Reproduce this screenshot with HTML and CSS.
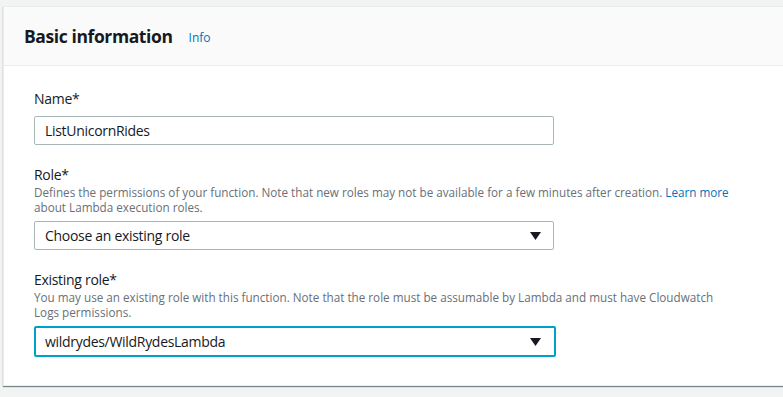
FILE: index.html
```html
<!DOCTYPE html>
<html lang="en">
<head>
<meta charset="utf-8">
<title>Basic information</title>
<link rel="stylesheet" href="styles.css">
</head>
<body>
<div class="page">
  <section class="card">
    <header class="card-header">
      <h2 class="title">Basic information</h2>
      <a class="info" href="#">Info</a>
    </header>
    <div class="card-body">
      <div class="field">
        <label class="label">Name*</label>
        <div class="control">ListUnicornRides</div>
      </div>
      <div class="field">
        <label class="label">Role*</label>
        <p class="desc">Defines the permissions of your function. Note that new roles may not be available for a few minutes after creation. <a href="#">Learn more</a> about Lambda execution roles.</p>
        <div class="control select">
          <span>Choose an existing role</span>
          <svg class="caret" width="11" height="8" viewBox="0 0 11 8"><path d="M0 0H11L5.5 8Z" fill="#16191f"/></svg>
        </div>
      </div>
      <div class="field">
        <label class="label">Existing role*</label>
        <p class="desc">You may use an existing role with this function. Note that the role must be assumable by Lambda and must have Cloudwatch Logs permissions.</p>
        <div class="control select focused">
          <span>wildrydes/WildRydesLambda</span>
          <svg class="caret" width="11" height="8" viewBox="0 0 11 8"><path d="M0 0H11L5.5 8Z" fill="#16191f"/></svg>
        </div>
      </div>
    </div>
  </section>
</div>
</body>
</html>
```

FILE: styles.css
```css
html, body {
  margin: 0;
  padding: 0;
  background: #f2f3f3;
  font-family: "Open Sans", "Noto Sans", sans-serif;
  color: #16191f;
}
.page {
  padding: 6px 0 0 3px;
  overflow: hidden;
  height: 397px;
  box-sizing: border-box;
}
.card {
  margin-right: -20px;
  background: #fff;
  border: 1px solid #eaeded;
  box-shadow: 0 1px 1px 0 rgba(0, 28, 36, 0.5);
}
.card-header {
  background: #fafafa;
  border-bottom: 1px solid #eaeded;
  height: 58px;
  display: flex;
  align-items: center;
  padding-left: 20px;
}
.title {
  margin: 0;
  font-size: 17.5px;
  font-weight: 700;
  letter-spacing: -0.4px;
}
.info {
  margin-left: 16px;
  font-size: 12px;
  color: #0073bb;
  text-decoration: none;
  margin-top: 3px;
}
.card-body {
  padding: 23px 0 28px 30px;
}
.field {
  width: 520px;
  margin-bottom: 20px;
}
.field:last-child {
  margin-bottom: 0;
}
.label {
  display: block;
  font-size: 14px;
  line-height: 20px;
  letter-spacing: -0.3px;
  margin-bottom: 7px;
}
.field .label + .desc {
  margin-top: -7px;
}
.desc {
  width: 700px;
  margin: 0 0 6px 0;
  font-size: 11.7px;
  line-height: 15px;
  color: #687078;
}
.desc a {
  color: #0073bb;
  text-decoration: none;
}
.control {
  box-sizing: border-box;
  height: 29px;
  border: 1px solid #aab7b8;
  border-radius: 2px;
  padding: 0 12px 0 10px;
  display: flex;
  align-items: center;
  font-size: 14px;
  letter-spacing: -0.3px;
  background: #fff;
}
.select {
  justify-content: space-between;
}
.focused {
  height: 31px;
  width: 522px;
  border: 2px solid #00a1c9;
  padding-left: 9px;
  padding-right: 13px;
}
.caret {
  display: block;
}
```
